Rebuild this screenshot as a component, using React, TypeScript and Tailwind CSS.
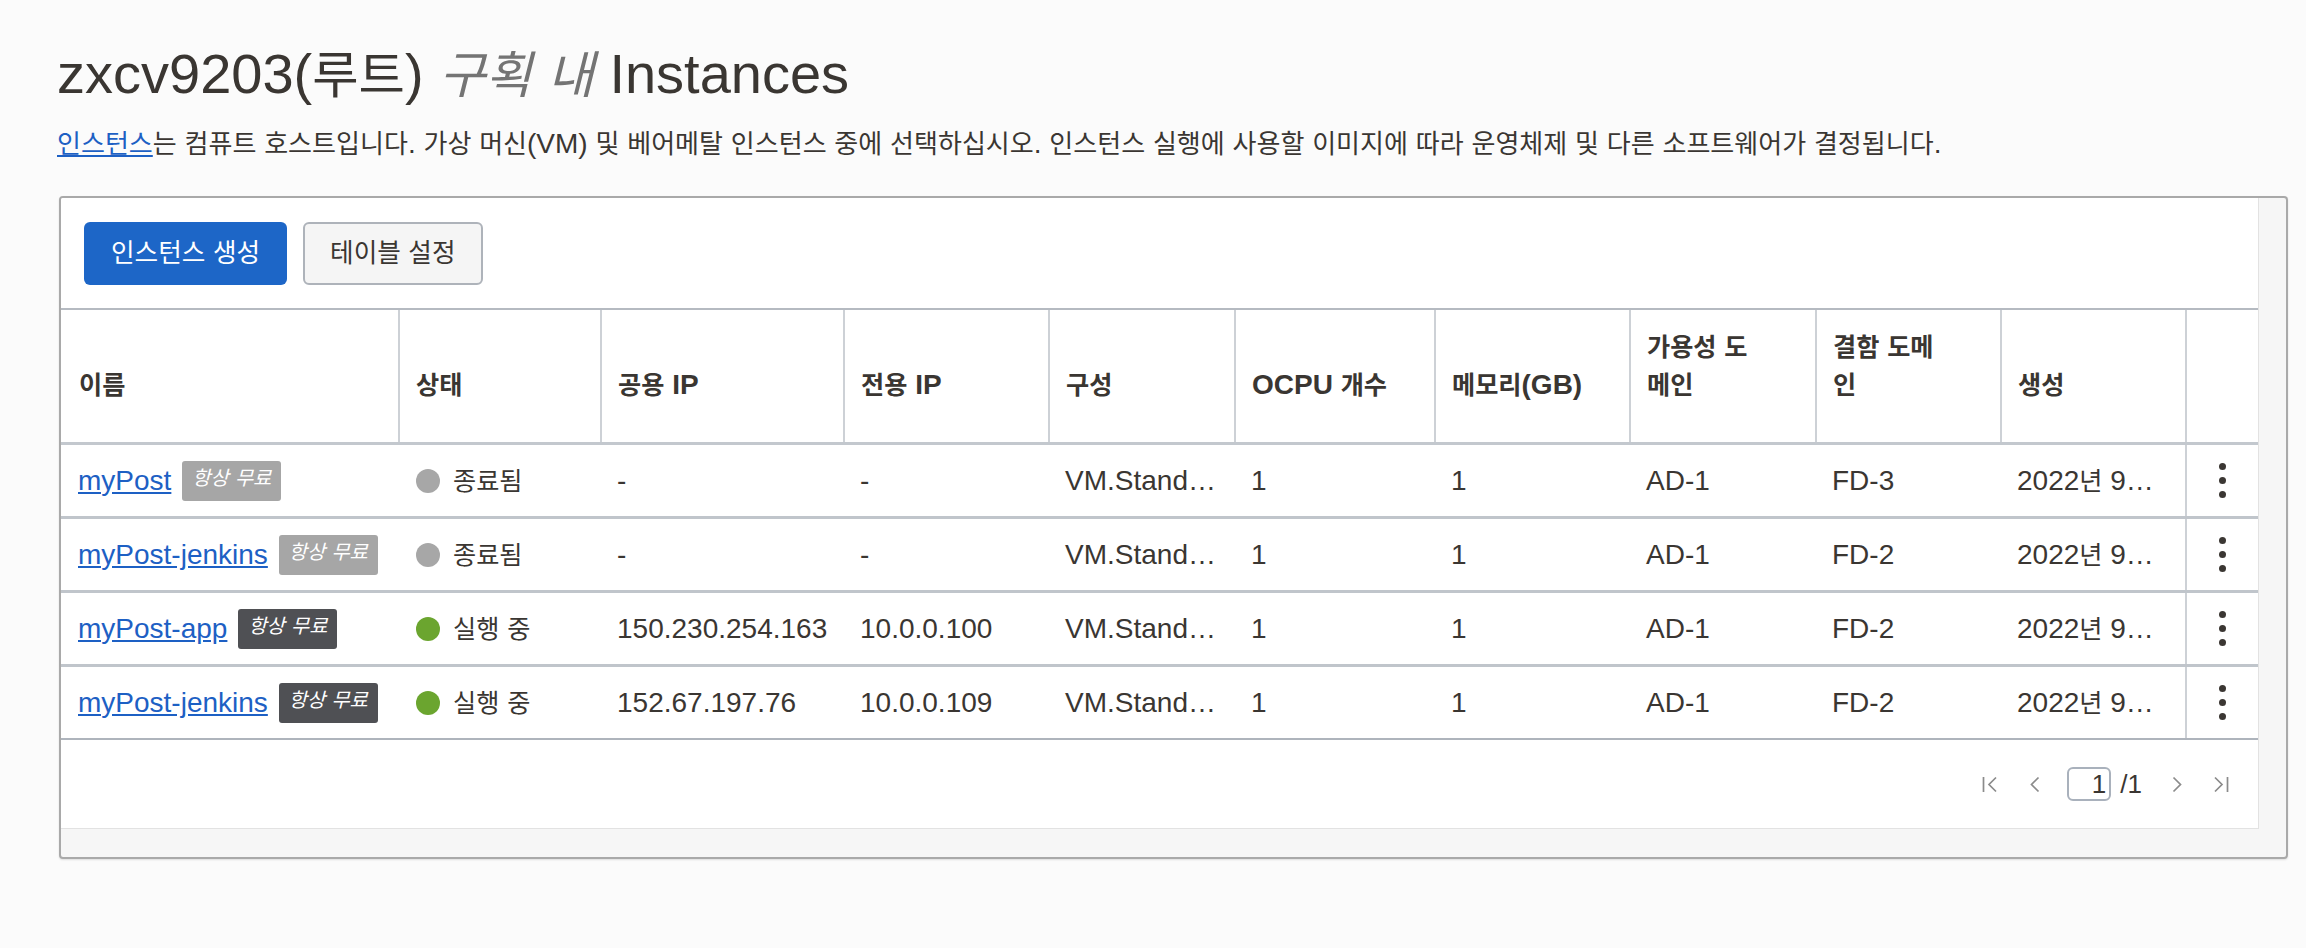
import React from "react";

const HANGUL = /([\u1100-\u11FF\u3130-\u318F\uAC00-\uD7AF]+)/;

function K({ t, wide, mid }: { t: string; wide?: boolean; mid?: boolean }) {
  const parts = t.split(HANGUL);
  return (
    <>
      {parts.map((p, i) =>
        i % 2 === 1 ? (
          <span key={i} className={wide ? "text-[0.95em]" : mid ? "text-[0.93em]" : "text-[0.9em]"}>
            {p}
          </span>
        ) : (
          <React.Fragment key={i}>{p}</React.Fragment>
        )
      )}
    </>
  );
}

const COLS =
  "grid grid-cols-[337px_202px_243px_205px_186px_200px_195px_186px_185px_185px_73px]";

type Row = {
  name: string;
  running: boolean;
  pub: string;
  priv: string;
  fd: string;
};

const rows: Row[] = [
  { name: "myPost", running: false, pub: "-", priv: "-", fd: "FD-3" },
  { name: "myPost-jenkins", running: false, pub: "-", priv: "-", fd: "FD-2" },
  { name: "myPost-app", running: true, pub: "150.230.254.163", priv: "10.0.0.100", fd: "FD-2" },
  { name: "myPost-jenkins", running: true, pub: "152.67.197.76", priv: "10.0.0.109", fd: "FD-2" },
];

function HeaderCell({ children, first }: { children?: React.ReactNode; first?: boolean }) {
  return (
    <div
      className={
        first
          ? "flex flex-col justify-end pb-[38px] pl-[18px] pr-[10px] leading-[38px] font-bold"
          : "flex flex-col justify-end pb-[38px] pl-[16px] pr-[10px] leading-[38px] font-bold border-l-2 border-[#cdd1d6]"
      }
    >
      <div className="whitespace-nowrap">{children}</div>
    </div>
  );
}

function Cell({ children }: { children?: React.ReactNode }) {
  return (
    <div className="flex items-center pl-[17px] pr-[12px] min-w-0">
      <span className="whitespace-nowrap">{children}</span>
    </div>
  );
}

function Dots() {
  return (
    <div className="flex flex-col gap-[7px]">
      <span className="block w-[7px] h-[7px] rounded-full bg-[#3b3733]" />
      <span className="block w-[7px] h-[7px] rounded-full bg-[#3b3733]" />
      <span className="block w-[7px] h-[7px] rounded-full bg-[#3b3733]" />
    </div>
  );
}

export default function App() {
  return (
    <div className="w-full h-[948px] overflow-hidden bg-[#fbfbfb] text-[#3a3632] pt-[42px] pl-[57px] [font-family:'Liberation_Sans','Noto_Sans_CJK_KR',sans-serif]">
      <h1 className="h-[64px] text-[56px] leading-[64px] font-normal whitespace-nowrap">
        <K t="zxcv9203(루트) " />
        <span className="italic text-[#747474]">
          <K t="구획 내" />
        </span>
        <K t=" Instances" />
      </h1>

      <p className="mt-[20px] text-[28px] leading-[36px] whitespace-nowrap">
        <a href="#" className="text-[#1d60c4] underline">
          <K t="인스턴스" mid />
        </a>
        <K
          mid
          t="는 컴퓨트 호스트입니다. 가상 머신(VM) 및 베어메탈 인스턴스 중에 선택하십시오. 인스턴스 실행에 사용할 이미지에 따라 운영체제 및 다른 소프트웨어가 결정됩니다."
        />
      </p>

      <div className="mt-[34px] ml-[2px] w-[2229px] rounded-[4px] border-2 border-[#a9a9a9] bg-[#f6f6f6] pr-[27px] pb-[28px] shadow-[0_1px_2px_rgba(0,0,0,0.12)]">
        <div className="bg-white border-r border-b border-[#e2e2e2] rounded-tl-[2px] text-[28px]">
          <div className="h-[110px] flex items-center gap-[16px] pl-[23px]">
            <button className="h-[63px] px-[27px] rounded-[6px] bg-[#1d66c7] text-white text-[27px] leading-none whitespace-nowrap">
              <K t="인스턴스 생성" wide />
            </button>
            <button className="h-[63px] px-[25px] rounded-[6px] border-2 border-[#aeb3ba] bg-[#f5f5f5] text-[#3a3632] text-[27px] leading-none whitespace-nowrap">
              <K t="테이블 설정" wide />
            </button>
          </div>

          <div className="border-t-2 border-[#b5bac1]">
            <div className={`${COLS} h-[135px] border-b-[3px] border-[#c3c8ce]`}>
              <HeaderCell first>
                <K t="이름" />
              </HeaderCell>
              <HeaderCell>
                <K t="상태" />
              </HeaderCell>
              <HeaderCell>
                <K t="공용 IP" />
              </HeaderCell>
              <HeaderCell>
                <K t="전용 IP" />
              </HeaderCell>
              <HeaderCell>
                <K t="구성" />
              </HeaderCell>
              <HeaderCell>
                <K t="OCPU 개수" />
              </HeaderCell>
              <HeaderCell>
                <K t="메모리(GB)" />
              </HeaderCell>
              <HeaderCell>
                <K t="가용성 도" />
                <br />
                <K t="메인" />
              </HeaderCell>
              <HeaderCell>
                <K t="결함 도메" />
                <br />
                <K t="인" />
              </HeaderCell>
              <HeaderCell>
                <K t="생성" />
              </HeaderCell>
              <HeaderCell />
            </div>

            {rows.map((r, i) => {
              const last = i === rows.length - 1;
              return (
                <div
                  key={i}
                  className={
                    last
                      ? `${COLS} h-[73px] border-b-2 border-[#aeb4bc]`
                      : `${COLS} h-[74px] border-b-[3px] border-[#c0c5cb]`
                  }
                >
                  <div className="flex items-center pl-[17px] min-w-0">
                    <a href="#" className="text-[#1d60c4] underline whitespace-nowrap">
                      {r.name}
                    </a>
                    <span
                      className={
                        r.running
                          ? "ml-[11px] shrink-0 h-[40px] px-[10px] pt-[4px] rounded-[3px] bg-[#4f5054] text-white italic text-[22px] leading-[25px] whitespace-nowrap"
                          : "ml-[11px] shrink-0 h-[40px] px-[10px] pt-[4px] rounded-[3px] bg-[#a6a6a6] text-white italic text-[22px] leading-[25px] whitespace-nowrap"
                      }
                    >
                      <K t="항상 무료" />
                    </span>
                  </div>
                  <div className="flex items-center pl-[18px]">
                    <span
                      className={
                        r.running
                          ? "shrink-0 w-[24px] h-[24px] rounded-full bg-[#6ba52f] mr-[13px]"
                          : "shrink-0 w-[24px] h-[24px] rounded-full bg-[#a7a7a7] mr-[13px]"
                      }
                    />
                    <span className="whitespace-nowrap">
                      <K t={r.running ? "실행 중" : "종료됨"} />
                    </span>
                  </div>
                  <Cell>{r.pub}</Cell>
                  <Cell>{r.priv}</Cell>
                  <Cell>VM.Stand…</Cell>
                  <Cell>1</Cell>
                  <Cell>1</Cell>
                  <Cell>AD-1</Cell>
                  <Cell>{r.fd}</Cell>
                  <Cell>
                    <K t="2022년 9…" />
                  </Cell>
                  <div className="flex items-center justify-center border-l-2 border-[#cdd1d6]">
                    <Dots />
                  </div>
                </div>
              );
            })}
          </div>

          <div className="h-[88px] flex items-center justify-end pr-[29px]">
            <svg width="16" height="17" viewBox="0 0 16 17" fill="none">
              <path d="M1.5 1v15M14 1.5L7 8.5l7 7" stroke="#8b8b8b" strokeWidth="1.7" />
            </svg>
            <svg className="ml-[32px]" width="10" height="17" viewBox="0 0 10 17" fill="none">
              <path d="M8.5 1.5L1.5 8.5l7 7" stroke="#8b8b8b" strokeWidth="1.7" />
            </svg>
            <input
              readOnly
              value="1"
              className="ml-[27px] w-[44px] h-[34px] rounded-[6px] border-2 border-[#a9b1bc] bg-white text-right pr-[3px] text-[26px] leading-none text-[#3a3632] outline-none"
            />
            <span className="ml-[9px] text-[26px] leading-none">/1</span>
            <svg className="ml-[30px]" width="10" height="17" viewBox="0 0 10 17" fill="none">
              <path d="M1.5 1.5l7 7-7 7" stroke="#8b8b8b" strokeWidth="1.7" />
            </svg>
            <svg className="ml-[31px]" width="16" height="17" viewBox="0 0 16 17" fill="none">
              <path d="M14.5 1v15M2 1.5l7 7-7 7" stroke="#8b8b8b" strokeWidth="1.7" />
            </svg>
          </div>
        </div>
      </div>
    </div>
  );
}
